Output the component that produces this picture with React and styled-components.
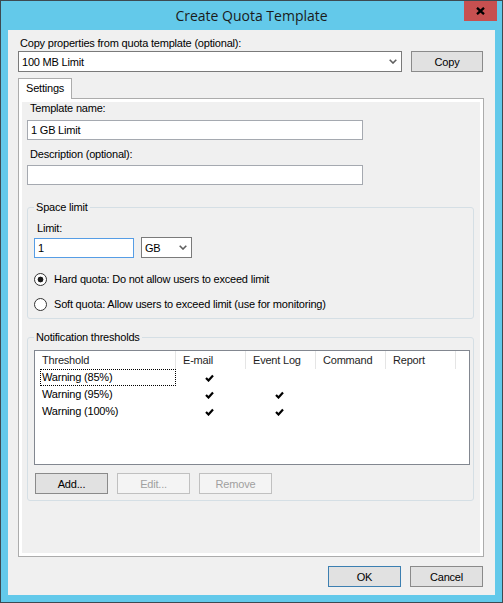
import React from "react";
import styled, { createGlobalStyle } from "styled-components";

const GlobalStyle = createGlobalStyle`
  html, body {
    margin: 0;
    padding: 0;
  }
  body {
    font-family: "Liberation Sans", Arial, sans-serif;
    font-size: 11px;
    letter-spacing: -0.2px;
    color: #000;
  }
  * {
    box-sizing: border-box;
  }
`;

const columns = "141px 70px 70px 70px 70px";

const thresholds = [
  { name: "Warning (85%)", email: true, eventLog: false, focused: true },
  { name: "Warning (95%)", email: true, eventLog: true },
  { name: "Warning (100%)", email: true, eventLog: true },
];

function Chevron() {
  return (
    <svg width="8" height="5" viewBox="0 0 8 5">
      <polyline points="0.7,0.7 4,4 7.3,0.7" fill="none" stroke="#5f5f5f" strokeWidth="1.6" />
    </svg>
  );
}

function Check() {
  return (
    <svg width="9" height="8" viewBox="0 0 9 8">
      <polyline points="1,4 3.5,6.5 8,1.5" fill="none" stroke="#000" strokeWidth="2.2" />
    </svg>
  );
}

export default function App() {
  return (
    <>
      <GlobalStyle />
      <Window>
        <TitleBar>
          <Title>Create Quota Template</Title>
          <CloseButton>
            <svg width="9" height="8" viewBox="0 0 9 8">
              <path d="M1 0.8 L8 7.2 M8 0.8 L1 7.2" stroke="#000" strokeWidth="2.3" />
            </svg>
          </CloseButton>
        </TitleBar>

        <Client>
          <Label $indent={2}>Copy properties from quota template (optional):</Label>
          <CopyRow>
            <Combo $width={384}>
              <span>100 MB Limit</span>
              <Chevron />
            </Combo>
            <Button $width={72}>Copy</Button>
          </CopyRow>

          <TabStrip>
            <Tab>Settings</Tab>
          </TabStrip>
          <TabPanel>
            <Page>
              <Label $indent={8}>Template name:</Label>
              <TextBox $top={5} $width={336} defaultValue="1 GB Limit" readOnly />
              <Label $indent={8} $top={8}>Description (optional):</Label>
              <TextBox $top={4} $width={336} defaultValue="" readOnly />

              <Group $top={16} $padTop={8}>
                <Legend>Space limit</Legend>
                <Label $indent={3}>Limit:</Label>
                <LimitRow>
                  <TextBox $top={1} $width={100} $focused defaultValue="1" readOnly />
                  <Combo $width={51}>
                    <span>GB</span>
                    <Chevron />
                  </Combo>
                </LimitRow>
                <RadioRow $top={13}>
                  <Radio $checked />
                  Hard quota: Do not allow users to exceed limit
                </RadioRow>
                <RadioRow $top={9}>
                  <Radio />
                  Soft quota: Allow users to exceed limit (use for monitoring)
                </RadioRow>
              </Group>

              <Group $top={12} $padTop={6}>
                <Legend>Notification thresholds</Legend>
                <ListView>
                  <HeaderRow>
                    <HeaderCell>Threshold</HeaderCell>
                    <HeaderCell>E-mail</HeaderCell>
                    <HeaderCell>Event Log</HeaderCell>
                    <HeaderCell>Command</HeaderCell>
                    <HeaderCell>Report</HeaderCell>
                  </HeaderRow>
                  {thresholds.map((t) => (
                    <ListRow key={t.name}>
                      <NameCell $focused={t.focused}>{t.name}</NameCell>
                      <CheckCell>{t.email && <Check />}</CheckCell>
                      <CheckCell>{t.eventLog && <Check />}</CheckCell>
                      <CheckCell />
                      <CheckCell />
                    </ListRow>
                  ))}
                </ListView>
                <ListButtons>
                  <Button $width={73}>Add...</Button>
                  <Button $width={73} disabled>
                    Edit...
                  </Button>
                  <Button $width={73} disabled>
                    Remove
                  </Button>
                </ListButtons>
              </Group>
            </Page>
          </TabPanel>

          <DialogButtons>
            <Button $width={73} $default>
              OK
            </Button>
            <Button $width={73}>Cancel</Button>
          </DialogButtons>
        </Client>
      </Window>
    </>
  );
}

const Window = styled.div`
  width: 503px;
  height: 603px;
  background: #63c9ea;
  border: 1px solid #3d4a52;
  display: flex;
  flex-direction: column;
`;

const TitleBar = styled.div`
  height: 29px;
  display: grid;
  grid-template-columns: 1fr auto 1fr;
`;

const Title = styled.div`
  grid-column: 2;
  font-family: "Open Sans", "Noto Sans", sans-serif;
  font-size: 14px;
  letter-spacing: 0;
  line-height: 29px;
  color: #1b1b1b;
`;

const CloseButton = styled.div`
  grid-column: 3;
  justify-self: end;
  align-self: start;
  width: 33px;
  height: 20px;
  margin-right: 5px;
  background: #c75050;
  display: flex;
  align-items: center;
  justify-content: center;
`;

const Client = styled.div`
  flex: 1;
  margin: 0 7px 7px 7px;
  background: #f0f0f0;
  padding: 7px 11px 0 10px;
  display: flex;
  flex-direction: column;
`;

const Label = styled.div`
  height: 13px;
  line-height: 13px;
  margin-left: ${(p) => p.$indent || 0}px;
  margin-top: ${(p) => p.$top || 0}px;
  white-space: nowrap;
`;

const CopyRow = styled.div`
  display: flex;
  gap: 9px;
  margin-top: 1px;
`;

const Combo = styled.div`
  width: ${(p) => p.$width}px;
  height: 21px;
  background: #fff;
  border: 1px solid #7a7a7a;
  padding: 0 4px 0 3px;
  display: flex;
  align-items: center;
  justify-content: space-between;
`;

const Button = styled.button`
  width: ${(p) => p.$width}px;
  height: 21px;
  padding: 0;
  font: inherit;
  letter-spacing: -0.2px;
  color: #000;
  background: #e1e1e1;
  border: 1px solid ${(p) => (p.$default ? "#3c7fb1" : "#8a8a8a")};

  &:disabled {
    color: #a0a0a0;
    background: #f4f4f4;
    border-color: #c0c0c0;
  }
`;

const TabStrip = styled.div`
  display: flex;
  margin-top: 6px;
  margin-bottom: -1px;
  position: relative;
  z-index: 1;
`;

const Tab = styled.div`
  width: 54px;
  height: 21px;
  padding: 3px 0 0 7px;
  line-height: 13px;
  background: #fff;
  border: 1px solid #acacac;
  border-bottom: none;
`;

const TabPanel = styled.div`
  height: 459px;
  background: #fff;
  border: 1px solid #acacac;
  padding: 3px;
`;

const Page = styled.div`
  height: 100%;
  background: #f0f0f0;
  display: flex;
  flex-direction: column;
  align-items: flex-start;
`;

const TextBox = styled.input`
  width: ${(p) => p.$width}px;
  height: 20px;
  margin: ${(p) => p.$top || 0}px 0 0 ${(p) => (p.$focused ? 0 : 5)}px;
  padding: 0 3px;
  font: inherit;
  letter-spacing: -0.2px;
  color: #000;
  background: #fff;
  border: 1px solid ${(p) => (p.$focused ? "#569de5" : "#a5a9b0")};
  outline: none;
`;

const Group = styled.fieldset`
  width: 447px;
  margin: ${(p) => p.$top}px 0 0 5px;
  padding: ${(p) => p.$padTop}px 6px 6px 6px;
  border: 1px solid #d5dfe5;
  border-radius: 3px;
  min-width: 0;
`;

const Legend = styled.legend`
  padding: 0 2px;
  line-height: 13px;
  height: 13px;
`;

const LimitRow = styled.div`
  display: flex;
  align-items: flex-start;
  gap: 7px;
  margin-top: 2px;
`;

const RadioRow = styled.div`
  display: flex;
  align-items: center;
  gap: 7px;
  height: 16px;
  margin-top: ${(p) => p.$top}px;
  white-space: nowrap;
`;

const Radio = styled.span`
  width: 13px;
  height: 13px;
  border-radius: 50%;
  border: 1px solid #333;
  background: ${(p) =>
    p.$checked ? "radial-gradient(circle, #1a1a1a 0 2.6px, #fff 3.2px)" : "#fff"};
`;

const ListView = styled.div`
  width: 436px;
  height: 115px;
  background: #fff;
  border: 1px solid #828790;
`;

const HeaderRow = styled.div`
  display: grid;
  grid-template-columns: ${columns};
  height: 18px;
`;

const HeaderCell = styled.div`
  border-right: 1px solid #e5e5e5;
  padding-left: 7px;
  line-height: 18px;
  color: #1e1e1e;
`;

const ListRow = styled.div`
  display: grid;
  grid-template-columns: ${columns};
  height: 17px;
`;

const NameCell = styled.div`
  margin-left: 5px;
  padding-left: 1px;
  line-height: 15px;
  border: 1px dotted ${(p) => (p.$focused ? "#000" : "transparent")};
`;

const CheckCell = styled.div`
  display: flex;
  align-items: center;
  justify-content: center;
  padding-right: 3px;
`;

const ListButtons = styled.div`
  display: flex;
  gap: 9px;
  margin: 8px 0 0 1px;
`;

const DialogButtons = styled.div`
  display: flex;
  justify-content: flex-end;
  gap: 9px;
  margin-top: 9px;
  padding-right: 1px;
`;
